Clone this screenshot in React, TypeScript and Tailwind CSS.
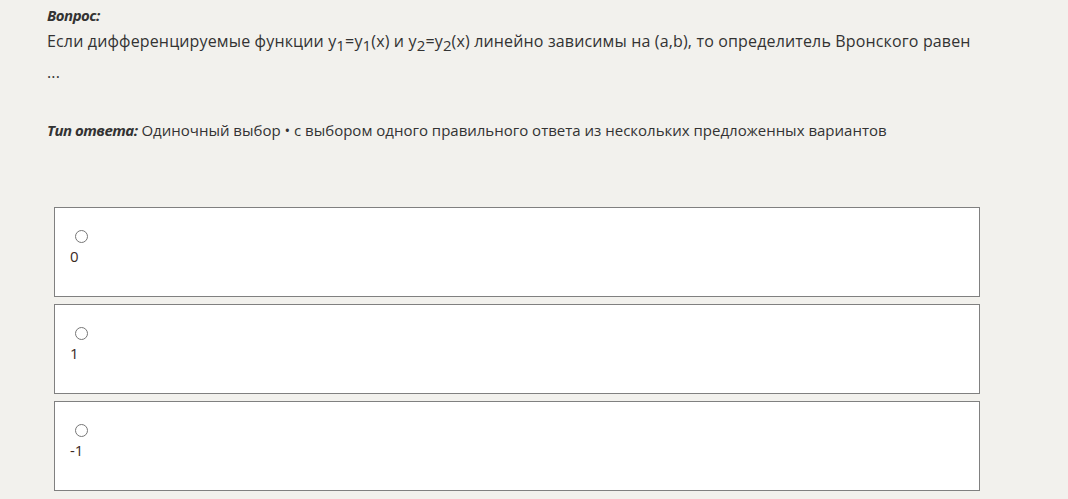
export default function App() {
  const options = ["0", "1", "-1"];
  return (
    <div className="min-h-[499px] bg-[#f2f1ed] text-[#333] font-['Open_Sans',sans-serif] text-[15px]">
      <div className="pl-[47px] pt-[5px] pr-[40px]">
        <div className="font-bold italic leading-[20px] tracking-[-0.5px]">Вопрос:</div>
        <div className="text-[16px] leading-[31px] mt-[1px] tracking-[0.15px]">
          Если дифференцируемые функции y<sub className="text-[15px]">1</sub>=y<sub className="text-[15px]">1</sub>(x) и y
          <sub className="text-[15px]">2</sub>=y<sub className="text-[15px]">2</sub>(x) линейно зависимы на (a,b), то
          определитель Вронского равен
          <br />
          ...
        </div>
        <div className="mt-[32px] leading-[20px]">
          <span className="font-bold italic tracking-[-0.5px]">Тип ответа:</span> Одиночный выбор • с выбором одного
          правильного ответа из нескольких предложенных вариантов
        </div>
      </div>
      <div className="mt-[67px] ml-[54px] w-[926px] flex flex-col gap-[7px]">
        {options.map((o) => (
          <label key={o} className="h-[90px] bg-white border border-[#808080] pl-[15px] pt-[22px] block">
            <input type="radio" name="ans" className="ml-[5px] w-[13px] h-[13px] block" />
            <div className="mt-[3px] leading-[20px] text-[#3a2a1e]">{o}</div>
          </label>
        ))}
      </div>
    </div>
  );
}
